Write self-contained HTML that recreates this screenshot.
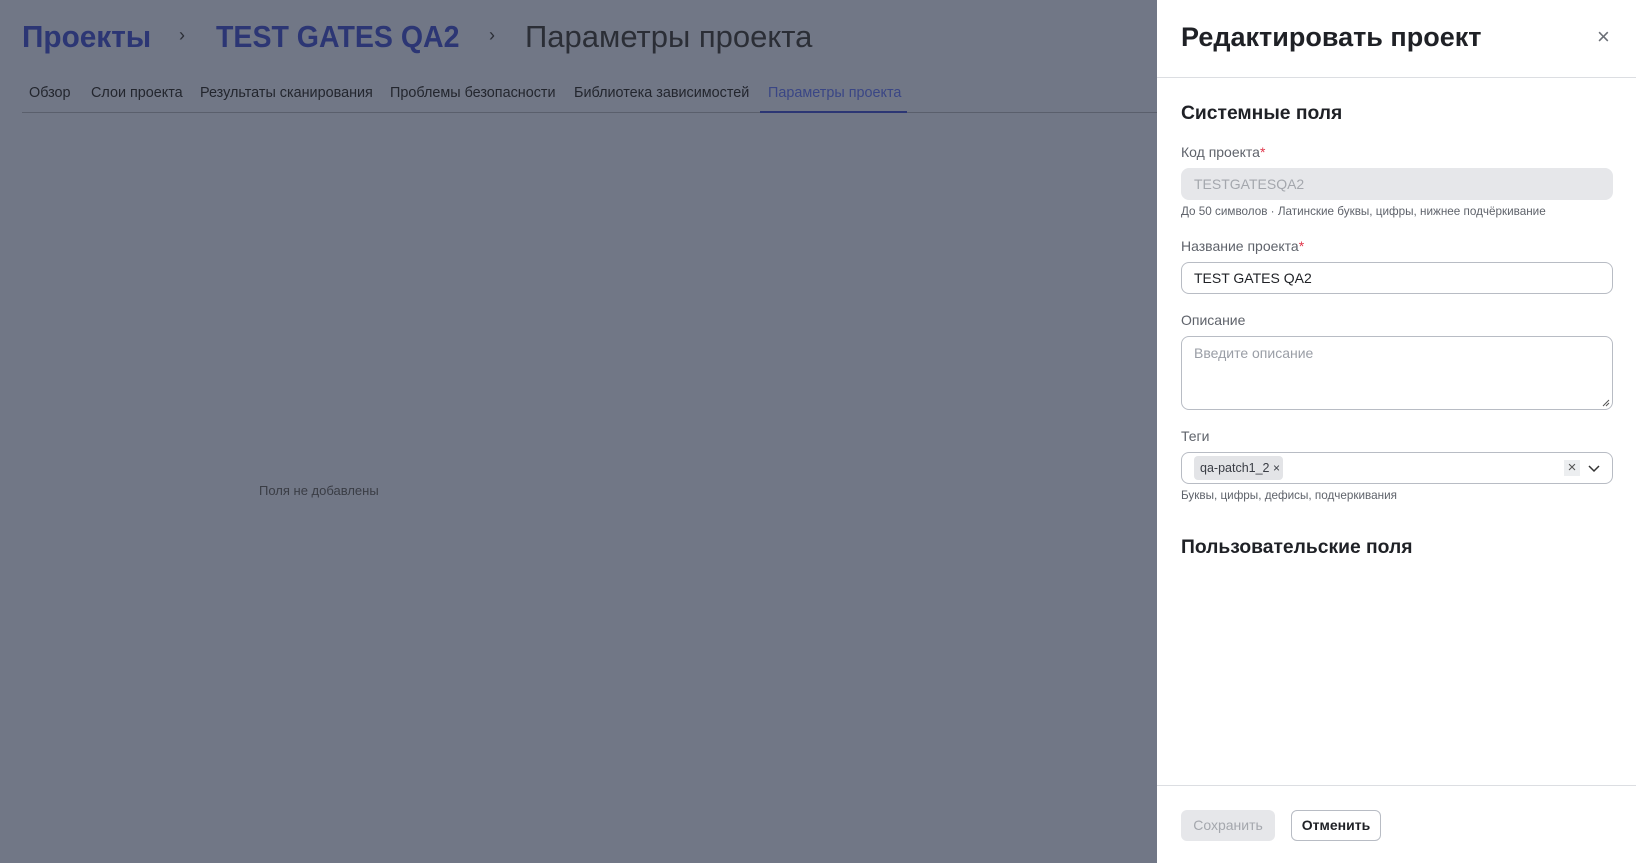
<!DOCTYPE html>
<html><head><meta charset="utf-8"><style>
*{box-sizing:border-box;margin:0;padding:0}
body{width:1636px;height:863px;overflow:hidden;position:relative;background:#717786;font-family:"Liberation Sans",sans-serif}
.a{position:absolute;white-space:nowrap}
.bc{top:18px;font-size:31px;line-height:38px}
.tab{top:84px;font-size:14.4px;line-height:18px;color:#23262e}
.dr{position:absolute;left:1157px;top:0;width:479px;height:863px;background:#fff}
.lbl{font-size:14px;color:#5f636b;line-height:18px}
.hint{font-size:11.7px;color:#5f636b;line-height:14px}
.inp{position:absolute;left:24px;width:432px;border:1px solid #b8bcc4;border-radius:8px;font-size:14px;line-height:18px}
.h2{font-size:19.3px;font-weight:bold;color:#1f2126;line-height:24px}
</style></head><body>
<div class="a bc" style="left:22px;color:#2c3674;font-weight:bold;transform:scaleX(0.96);transform-origin:left">Проекты</div>
<div class="a" style="left:179px;top:25px;font-size:18px;color:#2b2e36">›</div>
<div class="a bc" style="left:216px;color:#2c3674;font-weight:bold;transform:scaleX(0.92);transform-origin:left">TEST GATES QA2</div>
<div class="a" style="left:489px;top:25px;font-size:18px;color:#2b2e36">›</div>
<div class="a bc" style="left:525px;color:#2b2e36">Параметры проекта</div>
<div class="a tab" style="left:29px">Обзор</div>
<div class="a tab" style="left:91px">Слои проекта</div>
<div class="a tab" style="left:200px">Результаты сканирования</div>
<div class="a tab" style="left:390px">Проблемы безопасности</div>
<div class="a tab" style="left:574px">Библиотека зависимостей</div>
<div class="a tab" style="left:768px;color:#3a4685">Параметры проекта</div>
<div class="a" style="left:22px;top:112px;width:1135px;height:1px;background:#5a5f6c"></div>
<div class="a" style="left:760px;top:111px;width:147px;height:2px;background:#2c3674"></div>
<div class="a" style="left:259px;top:483px;font-size:13px;color:#3a3d45">Поля не добавлены</div>

<div class="dr">
<div class="a" style="left:24px;top:20px;font-size:27px;font-weight:bold;color:#1f2126;line-height:34px">Редактировать проект</div>
<div class="a" style="left:440px;top:26px;font-size:22px;color:#6a6e76;line-height:22px">×</div>
<div class="a" style="left:0;top:77px;width:479px;height:1px;background:#dcdee2"></div>
<div class="a h2" style="left:24px;top:102px">Системные поля</div>
<div class="a lbl" style="left:24px;top:143px">Код проекта<span style="color:#e0364a">*</span></div>
<div class="inp" style="top:168px;height:32px;background:#e6e7ea;border-color:#e6e7ea;padding:6px 12px;color:#a4a7ad">TESTGATESQA2</div>
<div class="a hint" style="left:24px;top:205px">До 50 символов · Латинские буквы, цифры, нижнее подчёркивание</div>
<div class="a lbl" style="left:24px;top:237px">Название проекта<span style="color:#e0364a">*</span></div>
<div class="inp" style="top:262px;height:32px;padding:6px 12px;color:#1f2126">TEST GATES QA2</div>
<div class="a lbl" style="left:24px;top:311px">Описание</div>
<div class="inp" style="top:336px;height:74px;padding:7px 12px;color:#9a9ea6">Введите описание
<svg style="position:absolute;right:2px;bottom:2px" width="8" height="8"><path d="M1 7L7 1M4 7L7 4" stroke="#555" stroke-width="1"/></svg></div>
<div class="a lbl" style="left:24px;top:427px">Теги</div>
<div class="inp" style="top:452px;height:32px">
<div class="a" style="left:12px;top:3px;height:24px;width:89px;background:#e3e4e7;border-radius:4px;font-size:12.5px;line-height:24px;padding-left:6px;color:#3a3d45">qa-patch1_2 <span style="font-size:12px">×</span></div>
<div class="a" style="left:382px;top:7px;width:16px;height:16px;background:#eceef0;font-size:15px;line-height:16px;text-align:center;color:#555">×</div>
<svg class="a" style="left:405px;top:10px" width="14" height="10"><path d="M2 3L7 8L12 3" fill="none" stroke="#333" stroke-width="1.5"/></svg>
</div>
<div class="a hint" style="left:24px;top:489px">Буквы, цифры, дефисы, подчеркивания</div>
<div class="a h2" style="left:24px;top:536px">Пользовательские поля</div>
<div class="a" style="left:0;top:785px;width:479px;height:1px;background:#dcdee2"></div>
<div class="a" style="left:24px;top:810px;width:94px;height:31px;background:#e6e7ea;border-radius:6px;font-size:14px;line-height:31px;text-align:center;color:#a4a7ad">Сохранить</div>
<div class="a" style="left:134px;top:810px;width:90px;height:31px;border:1px solid #b8bcc4;border-radius:6px;font-size:14px;line-height:29px;text-align:center;color:#1f2126;font-weight:bold">Отменить</div>
</div>
</body></html>
